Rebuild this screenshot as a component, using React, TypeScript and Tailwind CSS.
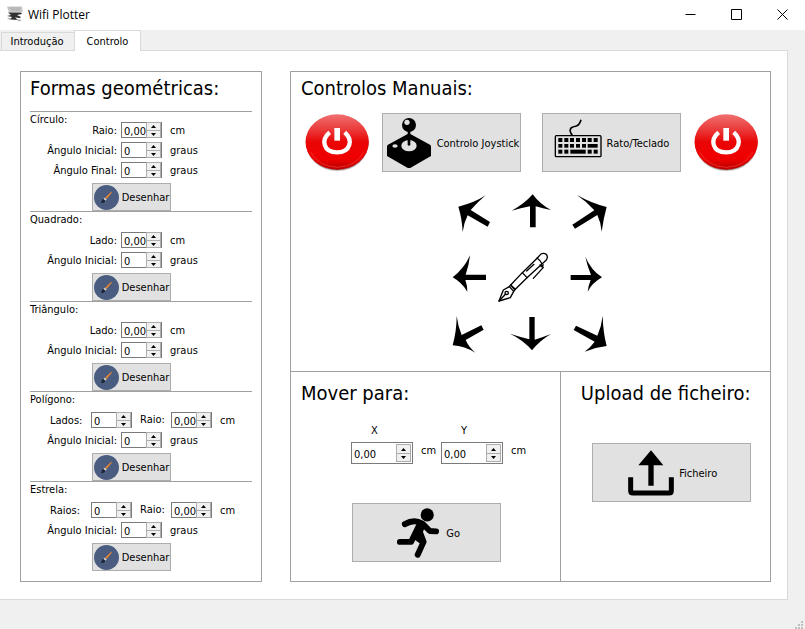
import { ReactNode, useState } from "react";

const buttonStyle =
  "flex items-center justify-center gap-[3px] border border-[#adadad] bg-[#e1e1e1] whitespace-nowrap";

function StepButtons({ name, large, onStep }: { name: string; large?: boolean; onStep: (d: number) => void }) {
  const size = large ? "h-[9px] w-[15px]" : "h-2 w-[15px]";
  const base = `${size} flex items-center justify-center border border-[#adadad] bg-[#f0f0f0]`;
  return (
    <div className="flex flex-col justify-center">
      <button type="button" aria-label={`${name} +`} className={`${base} border-b-0`} onClick={() => onStep(1)}>
        <svg viewBox="0 0 5 3" className="h-[3px] w-[5px]"><path d="M0 3 L2.5 0 L5 3Z" /></svg>
      </button>
      <button type="button" aria-label={`${name} -`} className={base} onClick={() => onStep(-1)}>
        <svg viewBox="0 0 5 3" className="h-[3px] w-[5px]"><path d="M0 0 L2.5 3 L5 0Z" /></svg>
      </button>
    </div>
  );
}

function Spin({ id, decimal, large }: { id: string; decimal?: boolean; large?: boolean }) {
  const [value, setValue] = useState(decimal ? "0,00" : "0");
  const step = (d: number) => {
    const next = Math.max(0, Number(value.replace(",", ".")) + d);
    setValue(decimal ? next.toFixed(2).replace(".", ",") : String(next));
  };
  return (
    <div
      className={`flex shrink-0 items-center justify-between border border-[#7a7a7a] bg-white ${
        large ? "h-[22px] w-[62px] pr-px" : "h-4 w-[41px]"
      }`}
    >
      <input
        id={id}
        value={value}
        onChange={(e) => setValue(e.target.value)}
        className="h-full w-0 flex-1 bg-transparent pt-0.5 pl-[2px] outline-none"
      />
      <StepButtons name={id} large={large} onStep={step} />
    </div>
  );
}

function BrushIcon() {
  return (
    <svg viewBox="0 0 75 75" className="size-[25px] shrink-0">
      <circle cx="37.5" cy="37.5" r="37.5" fill="#4a5d80" />
      <path d="M52 20 Q55 20 52 25 L38 42 L33 38Z" fill="#e8832f" />
      <path d="M32 38 L38 43 L34 47 L28 42Z" fill="#d9d4cc" />
      <path d="M28 42 L34 47 Q32 55 20 54 Q24 51 23 47 Q24 43 28 42Z" fill="#1d2735" />
    </svg>
  );
}

function Field({ id, label, decimal, unit }: { id: string; label: string; decimal?: boolean; unit: string }) {
  return (
    <div className="flex h-5 items-center">
      <label htmlFor={id} className="w-[87px] pt-0.5 text-right whitespace-nowrap">{label}</label>
      <div className="ml-1"><Spin id={id} decimal={decimal} /></div>
      <span className="ml-2 pt-0.5">{unit}</span>
    </div>
  );
}

function DoubleField({ id, label }: { id: string; label: string }) {
  return (
    <div className="flex h-5 items-center pl-5">
      <label htmlFor={`${id}-n`} className="w-[41px] pt-0.5">{label}</label>
      <Spin id={`${id}-n`} />
      <label htmlFor={`${id}-raio`} className="w-[39px] pl-2">Raio:</label>
      <Spin id={`${id}-raio`} decimal />
      <span className="ml-2 pt-0.5">cm</span>
    </div>
  );
}

function Shape({ title, compact, children }: { title: string; compact?: boolean; children: ReactNode }) {
  return (
    <section className="border-t border-[#a0a0a0]">
      <h2 className="leading-4">{title}</h2>
      <div className={compact ? "-mt-2" : "mt-0.5"}>{children}</div>
      <button type="button" className={`${buttonStyle} mt-[3px] ml-[62px] h-7 w-[79px]`}>
        <BrushIcon />
        <span className="pt-0.5">Desenhar</span>
      </button>
    </section>
  );
}

function PowerButton({ id, name }: { id: string; name: string }) {
  return (
    <button type="button" aria-label={name} className="shrink-0">
      <svg viewBox="70 158 198 177" className="h-[59px] w-[66px]">
        <defs>
          <linearGradient id={id} x1="0" y1="0" x2="0" y2="1">
            <stop offset="0" stopColor="#f07070" />
            <stop offset="0.3" stopColor="#ea3535" />
            <stop offset="0.5" stopColor="#ea0505" />
            <stop offset="0.8" stopColor="#f00000" />
            <stop offset="1" stopColor="#b80000" />
          </linearGradient>
        </defs>
        <ellipse cx="170" cy="250" rx="93" ry="83" fill="#d5d5d5" />
        <ellipse cx="170" cy="247" rx="94" ry="83" fill="#9c7c7c" />
        <ellipse cx="169.500" cy="245" rx="95" ry="83" fill={`url(#${id})`} />
        <path d="M90 275 Q115 319 170 321 Q225 319 249 275" fill="none" stroke="#f04040" strokeWidth="2" />
        <path d="M147 216 C120 238 128 276 169 276 C210 276 218 238 192 216" fill="none" stroke="#fff" strokeWidth="13" />
        <path d="M161 203 H178 V241 H161Z" fill="#fff" />
      </svg>
    </button>
  );
}

function JoystickIcon() {
  return (
    <svg viewBox="309 170 150 150" className="size-[50px] shrink-0">
      <circle cx="384" cy="191" r="21" />
      <circle cx="378" cy="183" r="8" fill="#e1e1e1" />
      <path d="M380 208 H388 V218 L447 250 Q450 252 450 256 V284 L389 319 Q384 322 379 319 L318 284 V256 Q318 252 321 250 L380 218Z" />
      <ellipse cx="384" cy="253" rx="23" ry="17" fill="#e1e1e1" />
      <path d="M380 230 H388 V251 Q384 255 380 251Z" />
      <ellipse cx="342" cy="254" rx="8" ry="5" fill="#e1e1e1" />
    </svg>
  );
}

function KeyboardIcon() {
  const keys = [83, 101, 118, 136, 154, 171, 189];
  return (
    <svg viewBox="70 170 150 150" className="size-[50px] shrink-0">
      <rect x="74" y="223" width="137" height="63" rx="3" fill="none" stroke="#000" strokeWidth="4" />
      <path d="M125 221 Q114 210 121 200 Q126 196 137 194 Q147 190 151 175" fill="none" stroke="#000" strokeWidth="5" />
      {keys.map((x) => <rect key={x} x={x} y="230" width="12" height="12" />)}
      {keys.slice(0, 5).map((x) => <rect key={x} x={x} y="248" width="12" height="11" />)}
      <rect x="171" y="248" width="30" height="11" />
      {[83, 101, 171, 189].map((x) => <rect key={x} x={x} y="265" width="12" height="12" />)}
      <rect x="119" y="265" width="46" height="12" />
    </svg>
  );
}

function RunIcon() {
  return (
    <svg viewBox="339 500 150 152" className="size-[50px] shrink-0">
      <circle cx="442" cy="521" r="20" />
      <g fill="none" stroke="#000" strokeWidth="18" strokeLinecap="round" strokeLinejoin="round">
        <path d="M374 549 Q402 532 427 547 L450 570 L469 571" />
        <path d="M416 556 L393 603 L359 603" />
        <path d="M420 574 L431 603 L413 642" />
      </g>
      <path d="M412 544 L435 558 L424 585 L438 603 L425 612 L398 592Z" />
    </svg>
  );
}

function UploadIcon() {
  return (
    <svg viewBox="228 322 150 150" className="size-[50px] shrink-0">
      <path d="M303 329 L340 374 H311 V435 H295 V374 H265Z" />
      <path d="M242 410 V450 Q242 457 249 457 H357 Q364 457 364 450 V410" fill="none" stroke="#000" strokeWidth="15" />
    </svg>
  );
}

const directions = [
  { name: "Cima esquerda", box: "3 -3 180 180", d: "M55 65 Q104 53 137 31 Q112 52 92 75 L150 111 L143 125 L83 91 Q71 115 68 141 Q66 100 55 65Z" },
  { name: "Cima", box: "183 -3 180 180", d: "M278 28 Q300 58 333 75 Q308 70 287 64 V127 H270 V64 Q242 69 215 77 Q253 57 278 28Z" },
  { name: "Cima direita", box: "363 -3 180 180", d: "M500 66 Q490 102 485 140 Q483 113 472 90 L405 131 L397 119 L463 76 Q440 50 411 30 Q455 55 500 66Z" },
  { name: "Esquerda", box: "3 177 180 180", d: "M38 277 Q73 250 90 211 Q87 241 77 269 H138 V285 H76 Q82 301 82 320 Q66 293 38 277Z" },
  { name: "Caneta", box: "183 177 180 180", d: "" },
  { name: "Direita", box: "363 177 180 180", d: "M486 277 Q456 294 443 320 Q445 302 452 285 H392 V270 H453 Q442 243 436 215 Q453 255 486 277Z" },
  { name: "Baixo esquerda", box: "3 357 180 180", d: "M38 481 Q50 437 50 393 Q54 424 65 450 L124 421 L131 434 L77 465 Q87 487 106 503 Q74 484 38 481Z" },
  { name: "Baixo", box: "183 357 180 180", d: "M276 496 Q250 465 210 446 Q238 455 268 463 V396 H284 V464 Q308 457 333 447 Q300 466 276 496Z" },
  { name: "Baixo direita", box: "363 357 180 180", d: "M500 483 Q467 486 434 500 Q451 488 464 470 L401 435 L408 422 L472 452 Q485 423 488 392 Q489 441 500 483Z" },
];

function PenDrawing() {
  return (
    <g fill="none" stroke="#000" strokeWidth="4" strokeLinejoin="round" strokeLinecap="round">
      <path d="M177 348 L190 315 L208 305 L221 319 L211 338Z" />
      <path d="M177 348 L197 327" />
      <circle cx="200" cy="324" r="5" />
      <path d="M208 305 L212 300 L226 313 L221 319 M214 303 L223 313" />
      <path d="M212 300 L247 263 L292 219 L302 208 Q310 202 319 208 Q325 216 319 225 L261 278 L226 313" />
      <path d="M247 263 L261 278 M291 219 Q302 226 306 237" />
      <path d="M260 258 L282 238 M300 240 L310 247 L280 280 M303 245 L310 240" />
    </g>
  );
}

function WindowButton({ name, children }: { name: string; children: ReactNode }) {
  return (
    <button type="button" aria-label={name} className="flex h-7 w-[46px] items-center justify-center">
      <svg viewBox="0 0 11 11" className="size-[11px]" fill="none" stroke="#000">{children}</svg>
    </button>
  );
}

export default function App() {
  return (
    <div className="flex min-h-screen flex-col bg-[#f0f0f0] font-['DejaVu_Sans_Condensed','DejaVu_Sans',sans-serif] text-[11px] leading-4 text-black">
      <header className="flex h-[30px] items-start bg-white">
        <svg viewBox="0 0 16 16" className="mt-1.5 ml-[7px] size-4">
          <path d="M0 0.500 H15 L16 6 L2 6.500Z" fill="#c8c8c8" />
          <path d="M2 2 H14 M4 4 H13" stroke="#a8a8a8" />
          <path d="M1 6.500 H14 L15 8 L10 9 L14 11 L13 12 L8 11.500 L11 14 L3 13.500 L5 11 L0 10 L4 9Z" fill="#303030" />
          <path d="M9 13 L15 14 L12 15.500Z M0 12 H4 L3 14Z" fill="#aaa" />
        </svg>
        <h1 className="ml-[5px] flex-1 font-['Open_Sans','Noto_Sans',sans-serif] text-xs leading-[30px]">Wifi Plotter</h1>
        <WindowButton name="Minimizar"><path d="M0.500 5.500 H10.500" /></WindowButton>
        <WindowButton name="Maximizar"><path d="M0.500 0.500 H10.500 V10.500 H0.500Z" /></WindowButton>
        <WindowButton name="Fechar"><path d="M0.500 0.500 L10.500 10.500 M10.500 0.500 L0.500 10.500" /></WindowButton>
      </header>

      <nav role="tablist" className="z-10 -mb-px flex h-[21px] items-end pl-px">
        <button type="button" role="tab" aria-selected={false} className="h-[19px] w-[73px] border border-r-0 border-[#d9d9d9] bg-[#f0f0f0] pr-0.5">Introdução</button>
        <button type="button" role="tab" aria-selected className="h-[21px] w-[67px] border border-b-0 border-[#d9d9d9] bg-white pt-0.5">Controlo</button>
      </nav>

      <main className="mr-[17px] flex gap-7 border-t border-r border-b border-[#d9d9d9] bg-white pt-5 pr-4 pb-[17px] pl-5">
        <div className="w-[242px] shrink-0 border border-[#a0a0a0] px-[9px] pt-0.5 pb-2.5">
          <h2 className="mb-[9px] text-[20px] leading-7 whitespace-nowrap">Formas geométricas:</h2>
          <Shape title="Círculo:" compact>
            <Field id="circulo-raio" label="Raio:" decimal unit="cm" />
            <Field id="circulo-inicial" label="Ângulo Inicial:" unit="graus" />
            <Field id="circulo-final" label="Ângulo Final:" unit="graus" />
          </Shape>
          <Shape title="Quadrado:">
            <Field id="quadrado-lado" label="Lado:" decimal unit="cm" />
            <Field id="quadrado-inicial" label="Ângulo Inicial:" unit="graus" />
          </Shape>
          <Shape title="Triângulo:">
            <Field id="triangulo-lado" label="Lado:" decimal unit="cm" />
            <Field id="triangulo-inicial" label="Ângulo Inicial:" unit="graus" />
          </Shape>
          <Shape title="Polígono:">
            <DoubleField id="poligono" label="Lados:" />
            <Field id="poligono-inicial" label="Ângulo Inicial:" unit="graus" />
          </Shape>
          <Shape title="Estrela:">
            <DoubleField id="estrela" label="Raios:" />
            <Field id="estrela-inicial" label="Ângulo Inicial:" unit="graus" />
          </Shape>
        </div>

        <div className="flex flex-1 flex-col border border-[#a0a0a0]">
          <section className="border-b border-[#a0a0a0] pt-0.5 pb-[7px]">
            <h2 className="mb-[11px] pl-2.5 text-[20px] leading-7">Controlos Manuais:</h2>
            <div className="flex justify-center gap-[21px] pl-0.5">
              <div className="flex gap-3">
                <PowerButton id="power-joystick" name="Ligar joystick" />
                <button type="button" className={`${buttonStyle} h-[59px] w-[139px]`}>
                  <JoystickIcon />
                  <span className="pt-0.5">Controlo Joystick</span>
                </button>
              </div>
              <div className="flex gap-3">
                <button type="button" className={`${buttonStyle} h-[59px] w-[139px]`}>
                  <KeyboardIcon />
                  <span className="pt-0.5">Rato/Teclado</span>
                </button>
                <PowerButton id="power-teclado" name="Ligar teclado" />
              </div>
            </div>
            <div className="mx-auto mt-3 grid w-[180px] grid-cols-3">
              {directions.map(({ name, box, d }) => (
                <button key={name} type="button" aria-label={name}>
                  <svg viewBox={box} className="size-[60px] overflow-visible">
                    {d ? <path d={d} /> : <PenDrawing />}
                  </svg>
                </button>
              ))}
            </div>
          </section>

          <div className="grid flex-1 grid-cols-[9fr_7fr]">
            <section className="pt-[7px]">
              <h2 className="mb-4 pl-2.5 text-[20px] leading-7">Mover para:</h2>
              <div className="flex pl-[60px]">
                {["X", "Y"].map((axis) => (
                  <div key={axis} className="flex gap-2">
                    <div className="flex flex-col gap-[3px]">
                      <label htmlFor={axis} className="pl-5">{axis}</label>
                      <Spin id={axis} decimal large />
                    </div>
                    <span className="w-5 pt-5">cm</span>
                  </div>
                ))}
              </div>
              <div className="flex justify-center pl-0.5">
                <button type="button" className={`${buttonStyle} mt-[39px] h-[59px] w-[149px]`}>
                  <RunIcon />
                  <span className="pt-0.5">Go</span>
                </button>
              </div>
            </section>
            <section className="border-l border-[#a0a0a0] pt-[7px]">
              <h2 className="mb-9 text-center text-[20px] leading-7">Upload de ficheiro:</h2>
              <div className="flex justify-center pl-3">
                <button type="button" className={`${buttonStyle} h-[59px] w-[159px]`}>
                  <UploadIcon />
                  <span className="pt-0.5">Ficheiro</span>
                </button>
              </div>
            </section>
          </div>
        </div>
      </main>

      <footer className="mt-auto flex justify-end pr-0.5">
        <svg viewBox="0 0 8 8" className="size-2" fill="#bfbfbf">
          <path d="M6 0h2v2H6z M3 3h2v2H3z M6 3h2v2H6z M0 6h2v2H0z M3 6h2v2H3z M6 6h2v2H6z" />
        </svg>
      </footer>
    </div>
  );
}
